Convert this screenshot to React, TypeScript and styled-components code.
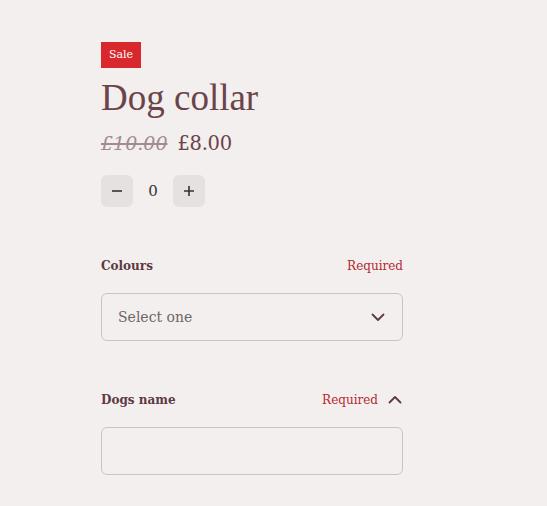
import React from "react";
import styled, { createGlobalStyle } from "styled-components";

const Global = createGlobalStyle`
  html, body { margin: 0; padding: 0; background: #f4efef; }
  body { font-family: "DejaVu Serif", serif; }
  * { box-sizing: border-box; }
`;

const Page = styled.div`
  min-height: 506px;
  padding: 42px 0 0 101px;
  background: #f4efef;
`;

const Column = styled.div`
  width: 302px;
  display: flex;
  flex-direction: column;
`;

const Badge = styled.span`
  align-self: flex-start;
  background: #d9272e;
  color: #fff;
  font-family: "DejaVu Serif", serif;
  font-size: 11px;
  line-height: 26px;
  height: 26px;
  padding: 0 8px;
`;

const Title = styled.h1`
  margin: 6px 0 0;
  font-family: "Liberation Serif", serif;
  font-weight: 400;
  font-size: 37px;
  line-height: 48px;
  color: #6b4449;
`;

const PriceRow = styled.div`
  display: flex;
  align-items: baseline;
  gap: 10px;
  margin-top: 10px;
`;

const OldPrice = styled.s`
  font-style: italic;
  font-size: 19px;
  color: #a08c8f;
  text-decoration-thickness: 1.5px;
`;

const NewPrice = styled.span`
  font-size: 19.5px;
  letter-spacing: -0.3px;
  color: #6b4449;
`;

const Qty = styled.div`
  display: flex;
  align-items: center;
  margin-top: 20px;
`;

const QtyButton = styled.button`
  width: 32px;
  height: 32px;
  border: none;
  border-radius: 6px;
  background: #e6e1e1;
  display: flex;
  align-items: center;
  justify-content: center;
  padding: 0;
  color: #333;
`;

const QtyValue = styled.span`
  width: 40px;
  text-align: center;
  font-size: 15px;
  color: #333;
`;

const Field = styled.div`
  display: flex;
  flex-direction: column;
  margin-top: ${(p: { $top: number }) => p.$top}px;
`;

const FieldHead = styled.div`
  display: flex;
  align-items: center;
  justify-content: space-between;
  height: 20px;
`;

const Label = styled.span`
  font-weight: 700;
  font-size: 12px;
  color: #5d3a40;
`;

const Required = styled.span`
  display: flex;
  align-items: center;
  gap: 9px;
  font-size: 12px;
  color: #b5282e;
`;

const Box = styled.div`
  margin-top: 17px;
  height: 48px;
  border: 1px solid #cbc3c4;
  border-radius: 6px;
  display: flex;
  align-items: center;
  justify-content: space-between;
  padding: 0 16px;
`;

const Placeholder = styled.span`
  font-size: 14px;
  color: #6e6566;
`;

const Chevron = ({ up }: { up?: boolean }) => (
  <svg width="16" height="16" viewBox="0 0 16 16" fill="none">
    <path
      d={up ? "M2.5 10.5 L8 5 L13.5 10.5" : "M2.5 5.5 L8 11 L13.5 5.5"}
      stroke="#5d3a40"
      strokeWidth="1.8"
      strokeLinecap="round"
      strokeLinejoin="round"
    />
  </svg>
);

const Minus = () => (
  <svg width="12" height="12" viewBox="0 0 12 12">
    <path d="M1 6 H11" stroke="#333" strokeWidth="1.6" />
  </svg>
);

const Plus = () => (
  <svg width="12" height="12" viewBox="0 0 12 12">
    <path d="M1 6 H11 M6 1 V11" stroke="#333" strokeWidth="1.6" />
  </svg>
);

export default function App() {
  return (
    <>
      <Global />
      <Page>
        <Column>
          <Badge>Sale</Badge>
          <Title>Dog collar</Title>
          <PriceRow>
            <OldPrice>£10.00</OldPrice>
            <NewPrice>£8.00</NewPrice>
          </PriceRow>
          <Qty>
            <QtyButton aria-label="Decrease"><Minus /></QtyButton>
            <QtyValue>0</QtyValue>
            <QtyButton aria-label="Increase"><Plus /></QtyButton>
          </Qty>
          <Field $top={49}>
            <FieldHead>
              <Label>Colours</Label>
              <Required>Required</Required>
            </FieldHead>
            <Box>
              <Placeholder>Select one</Placeholder>
              <Chevron />
            </Box>
          </Field>
          <Field $top={49}>
            <FieldHead>
              <Label>Dogs name</Label>
              <Required>Required <Chevron up /></Required>
            </FieldHead>
            <Box />
          </Field>
        </Column>
      </Page>
    </>
  );
}
